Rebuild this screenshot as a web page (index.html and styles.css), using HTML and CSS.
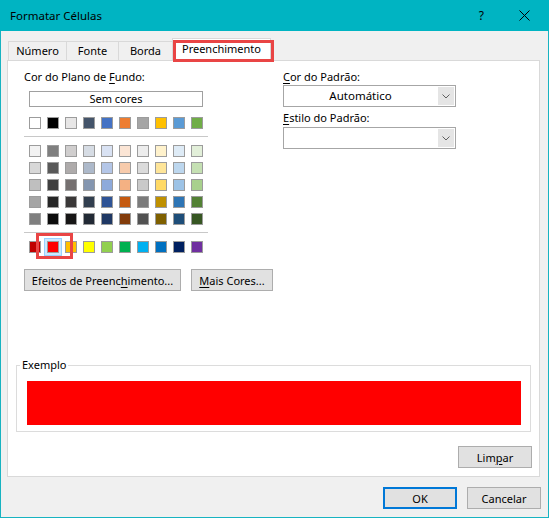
FILE: index.html
```html
<!DOCTYPE html>
<html lang="pt-BR">
<head>
    <meta charset="UTF-8">
    <title>Formatar Células</title>
    <link rel="stylesheet" href="styles.css">
</head>
<body>
    <div class="window">
        <div class="titlebar">
            <span class="title">Formatar Células</span>
            <span class="help">?</span>
            <svg class="close" width="11" height="11" viewBox="0 0 11 11">
                <path d="M0.5 0.5 L10.5 10.5 M10.5 0.5 L0.5 10.5" stroke="#000" stroke-width="1" fill="none"/>
            </svg>
        </div>

        <div class="dialog">
            <!-- abas -->
            <div class="tabs">
                <div class="tab w1">Número</div>
                <div class="tab w2">Fonte</div>
                <div class="tab w3">Borda</div>
                <div class="tab active">Preenchimento</div>
                <span class="mark mark-tab"></span>
            </div>

            <div class="panel">
                <div class="top">
                    <div class="left">
                        <div class="label">Cor do Plano de <u>F</u>undo:</div>
                        <div class="none">Sem cores</div>

                        <div class="grid row-main">
                            <i style="background:#ffffff"></i>
                            <i style="background:#000000"></i>
                            <i style="background:#e7e6e6"></i>
                            <i style="background:#44546a"></i>
                            <i style="background:#4472c4"></i>
                            <i style="background:#ed7d31"></i>
                            <i style="background:#a5a5a5"></i>
                            <i style="background:#ffc000"></i>
                            <i style="background:#5b9bd5"></i>
                            <i style="background:#70ad47"></i>
                        </div>
                        <div class="sep"></div>

                        <div class="grid row-tints">
                            <i style="background:#f2f2f2"></i>
                            <i style="background:#7f7f7f"></i>
                            <i style="background:#d0cece"></i>
                            <i style="background:#d6dce4"></i>
                            <i style="background:#d9e2f3"></i>
                            <i style="background:#fbe5d5"></i>
                            <i style="background:#ededed"></i>
                            <i style="background:#fff2cc"></i>
                            <i style="background:#deebf6"></i>
                            <i style="background:#e2efd9"></i>

                            <i style="background:#d8d8d8"></i>
                            <i style="background:#595959"></i>
                            <i style="background:#aeabab"></i>
                            <i style="background:#adb9ca"></i>
                            <i style="background:#b4c6e7"></i>
                            <i style="background:#f7cbac"></i>
                            <i style="background:#dbdbdb"></i>
                            <i style="background:#fee599"></i>
                            <i style="background:#bdd7ee"></i>
                            <i style="background:#c5e0b3"></i>

                            <i style="background:#bfbfbf"></i>
                            <i style="background:#3f3f3f"></i>
                            <i style="background:#757070"></i>
                            <i style="background:#8496b0"></i>
                            <i style="background:#8eaadb"></i>
                            <i style="background:#f4b183"></i>
                            <i style="background:#c9c9c9"></i>
                            <i style="background:#ffd965"></i>
                            <i style="background:#9dc3e6"></i>
                            <i style="background:#a8d08d"></i>

                            <i style="background:#a5a5a5"></i>
                            <i style="background:#262626"></i>
                            <i style="background:#3a3838"></i>
                            <i style="background:#323f4f"></i>
                            <i style="background:#2f5496"></i>
                            <i style="background:#c55a11"></i>
                            <i style="background:#7b7b7b"></i>
                            <i style="background:#bf9000"></i>
                            <i style="background:#2e75b5"></i>
                            <i style="background:#538135"></i>

                            <i style="background:#7f7f7f"></i>
                            <i style="background:#0c0c0c"></i>
                            <i style="background:#171616"></i>
                            <i style="background:#222a35"></i>
                            <i style="background:#1f3864"></i>
                            <i style="background:#833c0b"></i>
                            <i style="background:#525252"></i>
                            <i style="background:#7f6000"></i>
                            <i style="background:#1e4e79"></i>
                            <i style="background:#375623"></i>
                        </div>
                        <div class="sep"></div>

                        <div class="grid row-std">
                            <i style="background:#c00000"></i>
                            <i class="selected" style="background:#ff0000"></i>
                            <i style="background:#ffc000"></i>
                            <i style="background:#ffff00"></i>
                            <i style="background:#92d050"></i>
                            <i style="background:#00b050"></i>
                            <i style="background:#00b0f0"></i>
                            <i style="background:#0070c0"></i>
                            <i style="background:#002060"></i>
                            <i style="background:#7030a0"></i>
                            <span class="mark mark-swatch"></span>
                        </div>

                        <div class="buttons">
                            <button class="btn effects">Efeitos de Preenc<u>h</u>imento...</button>
                            <button class="btn more"><u>M</u>ais Cores...</button>
                        </div>
                    </div>

                    <div class="right">
                        <div class="label"><u>C</u>or do Padrão:</div>
                        <div class="select">
                            <span class="value">Automático</span>
                            <span class="arrow"><svg width="8" height="5" viewBox="0 0 8 5"><path d="M0.5 0.5 L4 4 L7.5 0.5" stroke="#606060" fill="none"/></svg></span>
                        </div>
                        <div class="label second"><u>E</u>stilo do Padrão:</div>
                        <div class="select second">
                            <span class="value"></span>
                            <span class="arrow"><svg width="8" height="5" viewBox="0 0 8 5"><path d="M0.5 0.5 L4 4 L7.5 0.5" stroke="#606060" fill="none"/></svg></span>
                        </div>
                    </div>
                </div>

                <fieldset class="sample">
                    <legend>Exemplo</legend>
                    <div class="preview"></div>
                </fieldset>

                <button class="btn clear">Lim<u>p</u>ar</button>
            </div>

            <div class="footer">
                <button class="btn default">OK</button>
                <button class="btn">Cancelar</button>
            </div>
        </div>
    </div>
</body>
</html>
```

FILE: styles.css
```css
*{
    margin: 0;
    padding: 0;
    box-sizing: border-box;
}
body{
    background: #f0f0f0;
    font-family: "Noto Sans", "Open Sans", sans-serif;
    font-size: 11px;
    color: #000;
}
u{
    text-decoration: underline;
    text-underline-offset: 2px;
}
.window{
    width: 549px;
    height: 518px;
    border: 1px solid #17b3c1;
    border-top: 0;
    background: #f0f0f0;
}
.titlebar{
    height: 31px;
    margin: 0 -1px;
    background: #00b4c2;
    display: flex;
    align-items: center;
    padding-left: 10px;
}
.title{
    font-size: 11.5px;
    flex: 1;
}
.help{
    font-size: 12px;
    margin-right: 35px;
}
.close{
    margin-right: 19px;
}
.dialog{
    padding: 0 7px 0 6px;
}

/* abas */
.tabs{
    position: relative;
    display: flex;
    align-items: flex-end;
    height: 23px;
    margin: 7px 0 -1px 1px;
}
.tab{
    height: 19px;
    margin-bottom: 1px;
    margin-right: -1px;
    border: 1px solid #d9d9d9;
    border-bottom: 0;
    background: #f0f0f0;
    text-align: center;
    line-height: 18px;
}
.w1{ width: 59px; }
.w2{ width: 53px; }
.w3{ width: 55px; }
.tab.active{
    position: relative;
    z-index: 1;
    width: 99px;
    height: 23px;
    margin-bottom: 0;
    background: #fff;
    line-height: 20px;
}
.mark{
    position: absolute;
    z-index: 2;
    border: 3px solid #e94545;
}
.mark-tab{
    left: 165px;
    top: 2px;
    width: 101px;
    height: 22px;
}

.panel{
    height: 417px;
    margin-right: 1px;
    border: 1px solid #d9d9d9;
    background: #fff;
    padding: 8px 8px 0 8px;
    display: flex;
    flex-direction: column;
}
.top{
    display: flex;
    margin-left: 8px;
}
.left{
    width: 184px;
}
.right{
    width: 173px;
    margin-left: 75px;
}
.label{
    height: 16px;
    line-height: 16px;
}
.none{
    width: 174px;
    height: 16px;
    margin: 6px 0 0 5px;
    border: 1px solid #a0a0a0;
    text-align: center;
    line-height: 14px;
}
.grid{
    display: grid;
    grid-template-columns: repeat(10, 12px);
    column-gap: 6px;
    row-gap: 5px;
    margin-left: 5px;
}
.grid i{
    display: block;
    width: 12px;
    height: 12px;
    border: 1px solid #9c9c9c;
}
.row-main{
    margin-top: 10px;
}
.row-tints, .row-std{
    margin-top: 8px;
}
.row-std{
    position: relative;
}
.grid i.selected{
    box-shadow: 0 0 0 2px #cce8ff, 0 0 0 3px #99d1ff;
}
.mark-swatch{
    left: 7px;
    top: -8px;
    width: 37px;
    height: 26px;
}
.sep{
    height: 1px;
    margin-top: 7px;
    background: #c8c8c8;
}
.buttons{
    display: flex;
    gap: 10px;
    width: 260px;
    margin-top: 16px;
}
.btn{
    flex: none;
    height: 22px;
    padding: 0;
    border: 1px solid #adadad;
    background: #e1e1e1;
    font: inherit;
    color: #000;
    white-space: nowrap;
}
.effects{ width: 157px; }
.more{ width: 82px; }

.select{
    display: flex;
    height: 22px;
    border: 1px solid #a6a6a6;
    background: #fff;
}
.select .value{
    flex: 1;
    text-align: center;
    line-height: 20px;
    font-size: 11.5px;
}
.select .arrow{
    width: 16px;
    margin: 1px;
    background: #e5e5e5;
    display: flex;
    align-items: center;
    justify-content: center;
}
.label.second{
    margin-top: 3px;
}
.select.second{
    margin-top: 1px;
}

.sample{
    margin-top: 66px;
    border: 1px solid #dcdcdc;
    padding: 8px 9px 6px 10px;
}
.sample legend{
    margin-left: -7px;
    padding: 0 2px;
    line-height: 16px;
}
.preview{
    height: 44px;
    background: #ff0000;
}
.clear{
    align-self: flex-end;
    width: 74px;
    margin: 14px -1px 0 0;
}

.footer{
    display: flex;
    justify-content: flex-end;
    gap: 10px;
    margin-top: 10px;
}
.footer .btn{
    width: 74px;
}
.btn.default{
    border: 2px solid #0078d7;
}
```
